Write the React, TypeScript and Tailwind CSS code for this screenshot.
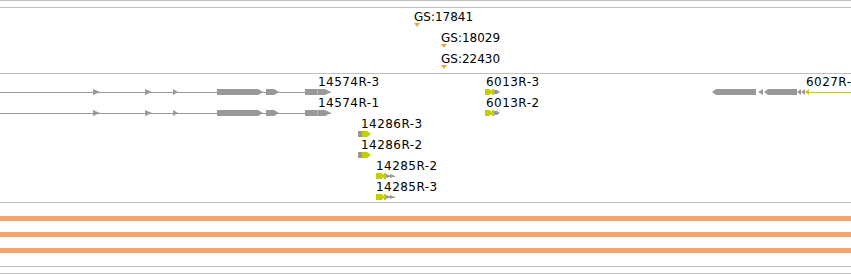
const GRAY = '#999999';
const LIME = '#c4cf00';
const TRI = '#eea43a';

type Label = { text: string; x: number; top: number };

// right-pointing exon: body from x0, tip ends at x1
function right(x0: number, x1: number, cy: number, h = 6, tip = 4) {
  const t = cy - h / 2;
  const b = cy + h / 2;
  return `${x0},${t} ${x1 - tip},${t} ${x1},${cy} ${x1 - tip},${b} ${x0},${b}`;
}

// left-pointing exon: tip starts at x0, body ends at x1
function left(x0: number, x1: number, cy: number, h = 6, tip = 4) {
  const t = cy - h / 2;
  const b = cy + h / 2;
  return `${x0},${cy} ${x0 + tip},${t} ${x1},${t} ${x1},${b} ${x0 + tip},${b}`;
}

const gsLabels: Label[] = [
  { text: 'GS:17841', x: 414, top: 2 },
  { text: 'GS:18029', x: 441, top: 23 },
  { text: 'GS:22430', x: 441, top: 44 },
];

const geneLabels: Label[] = [
  { text: '14574R-3', x: 318, top: 1 },
  { text: '6013R-3', x: 486, top: 1 },
  { text: '6027R-3', x: 806, top: 1 },
  { text: '14574R-1', x: 318, top: 22 },
  { text: '6013R-2', x: 486, top: 22 },
  { text: '14286R-3', x: 361, top: 43 },
  { text: '14286R-2', x: 361, top: 64 },
  { text: '14285R-2', x: 376, top: 85 },
  { text: '14285R-3', x: 376, top: 106 },
];

function Labels({ items, wide }: { items: Label[]; wide?: boolean }) {
  return (
    <>
      {items.map((l) => (
        <span
          key={l.text}
          className={
            wide
              ? 'absolute whitespace-nowrap text-[12px] leading-[14px] tracking-[0.45px] text-black'
              : 'absolute whitespace-nowrap text-[12px] leading-[14px] text-black'
          }
          style={{ left: l.x, top: l.top }}
        >
          {l.text}
        </span>
      ))}
    </>
  );
}

function Transcript({ cy }: { cy: number }) {
  return (
    <g>
      <rect x={0} y={cy} width={331} height={1} fill={GRAY} />
      <polygon points={`93,${cy - 3} 93,${cy + 3} 100,${cy}`} fill={GRAY} />
      <polygon points={`145,${cy - 3} 145,${cy + 3} 152,${cy}`} fill={GRAY} />
      <polygon points={`173,${cy - 3} 173,${cy + 3} 178,${cy}`} fill={GRAY} />
      <polygon points={right(217, 263, cy, 6, 5)} fill={GRAY} />
      <polygon points={right(266, 279, cy, 6, 5)} fill={GRAY} />
      <polygon points={right(305, 331, cy, 6, 6)} fill={GRAY} />
      <rect x={317} y={cy - 3} width={1} height={6} fill={LIME} />
    </g>
  );
}

function SmallFwd({ cy }: { cy: number }) {
  return (
    <g>
      <rect x={485} y={cy - 3} width={4} height={6} fill={LIME} />
      <polygon points={`489,${cy - 3} 494,${cy} 489,${cy + 3}`} fill={LIME} />
      <rect x={492} y={cy - 3} width={2} height={6} fill={LIME} />
      <polygon points={right(494, 500, cy, 4, 3)} fill={GRAY} />
    </g>
  );
}

function Short({ cy }: { cy: number }) {
  return (
    <g>
      <rect x={358} y={cy - 3} width={4} height={6} fill={GRAY} />
      <polygon points={right(362, 371, cy, 6, 4)} fill={LIME} />
    </g>
  );
}

function Pair({ cy }: { cy: number }) {
  return (
    <g>
      <rect x={376} y={cy - 3} width={6} height={6} fill={LIME} />
      <polygon points={`381,${cy - 3} 386,${cy} 381,${cy + 3}`} fill={LIME} />
      <rect x={384} y={cy - 3} width={2} height={6} fill={LIME} />
      <rect x={386} y={cy} width={9} height={1} fill={GRAY} />
      <polygon points={`386,${cy - 2} 391,${cy} 386,${cy + 2}`} fill={GRAY} />
      <polygon points={`390,${cy - 2} 395,${cy} 390,${cy + 2}`} fill={GRAY} />
    </g>
  );
}

function Reverse({ cy }: { cy: number }) {
  return (
    <g>
      <polygon points={left(712, 756, cy, 6, 4)} fill={GRAY} />
      <polygon points={`763,${cy - 3} 763,${cy + 3} 758,${cy}`} fill={GRAY} />
      <polygon points={left(764, 797, cy, 6, 4)} fill={GRAY} />
      <polygon points={`801,${cy - 3} 801,${cy + 3} 797,${cy}`} fill={GRAY} />
      <polygon points={`805,${cy - 3} 805,${cy + 3} 801,${cy}`} fill={GRAY} />
      <polygon points={`809,${cy - 3} 809,${cy + 3} 805,${cy}`} fill={LIME} />
      <rect x={808} y={cy} width={43} height={1} fill={LIME} />
    </g>
  );
}

function Rule() {
  return <div className="h-px shrink-0 bg-[#c0c0c0]" />;
}

export default function App() {
  return (
    <div className="flex h-[274px] w-[851px] flex-col overflow-hidden bg-white font-['DejaVu_Sans',sans-serif]">
      <Rule />
      <div className="h-[6px] shrink-0" />
      <Rule />

      {/* GS markers */}
      <div className="relative h-[65px] shrink-0">
        <svg className="absolute inset-0" width={851} height={65}>
          {[15, 36, 57].map((t, i) => {
            const x = i === 0 ? 414 : 441;
            return <polygon key={t} points={`${x},${t} ${x + 6},${t} ${x + 3},${t + 4}`} fill={TRI} />;
          })}
        </svg>
        <Labels items={gsLabels} />
      </div>
      <Rule />

      {/* genes */}
      <div className="relative h-[128px] shrink-0">
        <svg className="absolute inset-0" width={851} height={128}>
          <Transcript cy={18} />
          <Transcript cy={39} />
          <SmallFwd cy={18} />
          <SmallFwd cy={39} />
          <Reverse cy={18} />
          <Short cy={60} />
          <Short cy={81} />
          <Pair cy={102} />
          <Pair cy={123} />
        </svg>
        <Labels items={geneLabels} wide />
      </div>
      <Rule />

      {/* coverage */}
      <div className="flex h-[63px] shrink-0 flex-col gap-[11px] pt-[13px]">
        <div className="h-[5px] bg-[#f5a36f]" />
        <div className="h-[5px] bg-[#f5a36f]" />
        <div className="h-[5px] bg-[#f5a36f]" />
      </div>
      <Rule />
      <div className="h-[6px] shrink-0" />
      <Rule />
    </div>
  );
}
